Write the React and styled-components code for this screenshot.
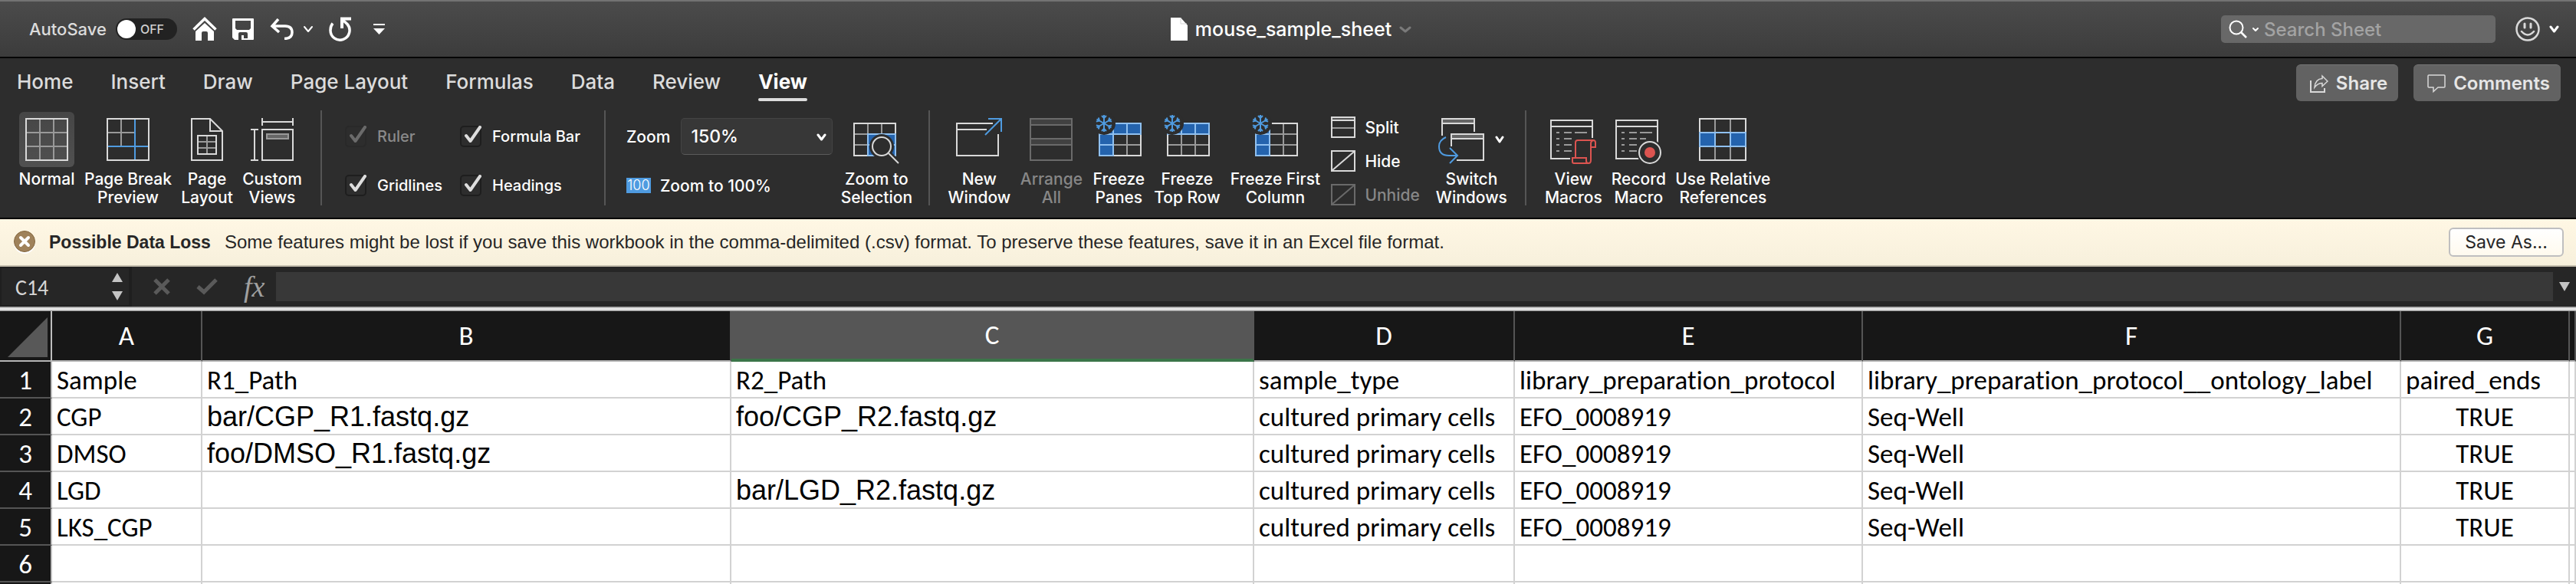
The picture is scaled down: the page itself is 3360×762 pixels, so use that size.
import React from "react";
import styled, { createGlobalStyle, css } from "styled-components";

const ui = `Inter, "Liberation Sans", sans-serif`;
const sheetFont = `Carlito, Calibri, "Open Sans", sans-serif`;
const arial = `"Liberation Sans", Arial, sans-serif`;

const LINE = "#d9d9d9";
const GREY = "#999999";
const DIM = "#6a6a6a";
const BLUE = "#4f9be0";
const FILL = "#2463ad";
const PALE = "#8fc0f0";
const BG = "#2d2d2d";
const RED = "#dc5450";

const Global = createGlobalStyle`
  *, *::before, *::after { box-sizing: border-box; }
  body { margin: 0; background: #fff; font-family: ${ui}; }
  button, input, select { font: inherit; color: inherit; margin: 0; }
  svg { display: block; flex: none; }
`;

const Window = styled.div`
  display: flex;
  flex-direction: column;
  height: 100vh;
  min-width: 2400px;
  overflow: hidden;
`;

/* ---------- title bar ---------- */

const TitleBar = styled.header`
  display: grid;
  grid-template-columns: 1fr auto 1fr;
  align-items: center;
  height: 76px;
  flex: none;
  padding: 0 20px 0 28px;
  border-top: 2px solid #737373;
  border-bottom: 2px solid #060606;
  background: linear-gradient(#4b4b4b, #3c3c3c);
  color: #fff;
`;

const QuickAccess = styled.div`
  display: flex;
  align-items: center;
  gap: 20px;
  padding-left: 10px;
`;

const AutoSave = styled.label`
  display: flex;
  align-items: center;
  gap: 12px;
  font-size: 22px;
  font-weight: 500;
  color: #dcdcdc;
`;

const SwitchTrack = styled.span`
  position: relative;
  display: block;
  width: 80px;
  height: 28px;
`;

const SwitchInput = styled.input`
  appearance: none;
  display: block;
  width: 80px;
  height: 28px;
  border-radius: 14px;
  background: #222;
  &::before {
    content: "";
    display: block;
    width: 24px;
    height: 24px;
    margin: 2px;
    border-radius: 50%;
    background: #fff;
  }
`;

const SwitchState = styled.span`
  position: absolute;
  left: 32px;
  top: 0;
  line-height: 28px;
  font-size: 16px;
  color: #cfcfcf;
`;

const IconButton = styled.button`
  display: flex;
  align-items: center;
  padding: 0;
  border: 0;
  background: none;
`;

const MenuButton = styled(IconButton)`
  padding-left: 8px;
`;

const UndoPair = styled.div`
  display: flex;
  align-items: center;
  gap: 12px;
`;

const DocTitle = styled.div`
  display: flex;
  align-items: center;
  gap: 10px;
  font-size: 25px;
  font-weight: 500;
`;

const TitleRight = styled.div`
  display: flex;
  align-items: center;
  justify-content: flex-end;
  gap: 26px;
`;

const SearchBox = styled.label`
  display: flex;
  align-items: center;
  gap: 6px;
  width: 358px;
  height: 36px;
  padding: 0 10px;
  border-radius: 5px;
  background: #686868;
`;

const SearchInput = styled.input`
  flex: 1;
  min-width: 0;
  padding: 0;
  border: 0;
  background: none;
  outline: none;
  font-size: 24px;
  font-weight: 500;
  &::placeholder {
    color: #a3a3a3;
    opacity: 1;
  }
`;

const SmileyButton = styled(IconButton)`
  gap: 12px;
  padding-right: 2px;
`;

/* ---------- tabs ---------- */

const TabBar = styled.div`
  display: flex;
  justify-content: space-between;
  flex: none;
  padding: 8px 20px 4px 22px;
  background: ${BG};
`;

const Tabs = styled.nav`
  display: flex;
  gap: 49px;
`;

const Tab = styled.a`
  height: 48px;
  line-height: 46px;
  font-size: 26px;
  font-weight: ${(p) => (p.$active ? 700 : 500)};
  color: ${(p) => (p.$active ? "#fff" : "#dcdcdc")};
  text-decoration: none;
  position: relative;
  ${(p) =>
    p.$active &&
    css`
      &::after {
        content: "";
        position: absolute;
        left: 0;
        right: 0;
        bottom: 0;
        height: 4px;
        border-radius: 2px;
        background: #dcdcdc;
      }
    `}
`;

const TabActions = styled.div`
  display: flex;
  gap: 20px;
`;

const ActionButton = styled.button`
  display: flex;
  align-items: center;
  gap: 10px;
  height: 48px;
  padding: 0 14px 0 18px;
  border: 0;
  border-top: 1px solid #757575;
  border-radius: 6px;
  background: #626262;
  color: #e6e6e6;
  font-size: 24px;
  font-weight: 600;
`;

/* ---------- ribbon ---------- */

const Ribbon = styled.div`
  display: flex;
  align-items: flex-start;
  flex: none;
  height: 150px;
  padding: 8px 0 0;
  border-bottom: 2px solid #000;
  background: ${BG};
  color: #fff;
`;

const Group = styled.div`
  display: flex;
  align-items: flex-start;
  gap: 14px;
  padding: 0 25px;
`;

const Divider = styled.div`
  width: 2px;
  height: 124px;
  background: #555;
`;

const ToolButton = styled.button`
  display: flex;
  flex-direction: column;
  align-items: center;
  gap: 4px;
  width: ${(p) => p.$width}px;
  padding: 2px 0 0;
  border: 0;
  background: none;
  font-size: 21px;
  font-weight: 500;
  line-height: 24px;
  white-space: nowrap;
  text-align: center;
  color: ${(p) => (p.disabled ? "#878787" : "#fff")};
`;

const ToolIcon = styled.span`
  display: flex;
  align-items: center;
  justify-content: center;
  gap: 14px;
  min-width: 72px;
  height: 72px;
  border-radius: 6px;
  background: ${(p) => (p.$pressed ? "linear-gradient(#464646, #505050)" : "none")};
`;

const CheckGrid = styled.div`
  display: grid;
  grid-template-columns: 150px auto;
  row-gap: 36px;
  padding: 20px 6px 0 5px;
`;

const CheckLabel = styled.label`
  position: relative;
  display: flex;
  align-items: center;
  gap: 14px;
  height: 28px;
  font-size: 20px;
  font-weight: 500;
  white-space: nowrap;
  color: ${(p) => (p.$disabled ? "#8a8a8a" : "#fff")};
  svg {
    position: absolute;
    left: 0;
    top: 0;
    pointer-events: none;
    opacity: ${(p) => (p.$disabled ? 0.35 : 1)};
  }
`;

const CheckInput = styled.input`
  appearance: none;
  width: 28px;
  height: 28px;
  border: 2px solid ${(p) => (p.disabled ? "#292929" : "#1e1e1e")};
  border-radius: 5px;
`;

const ZoomStack = styled.div`
  display: flex;
  flex-direction: column;
  gap: 26px;
  padding: 10px 0 0 2px;
`;

const ZoomRow = styled.div`
  display: flex;
  align-items: center;
  gap: 14px;
  font-size: 21px;
  font-weight: 500;
`;

const SelectWrap = styled.div`
  position: relative;
  svg {
    position: absolute;
    right: 8px;
    top: 20px;
    pointer-events: none;
  }
`;

const ZoomSelect = styled.select`
  appearance: none;
  display: block;
  width: 198px;
  height: 48px;
  padding: 0 12px;
  border: 1px solid #444;
  border-bottom: 1px solid #5c5c5c;
  border-radius: 5px;
  background: #373737;
  font-size: 23px;
`;

const InlineTool = styled.button`
  display: flex;
  align-items: center;
  gap: 12px;
  height: 28px;
  padding: 0;
  border: 0;
  background: none;
  font-size: 21px;
  font-weight: 500;
  white-space: nowrap;
  color: ${(p) => (p.disabled ? "#878787" : "#fff")};
`;

const HundredBadge = styled.span`
  width: 32px;
  background: ${BLUE};
  font-size: 18px;
  font-weight: 300;
  line-height: 20px;
  text-align: center;
`;

const InlineList = styled.div`
  display: flex;
  flex-direction: column;
  gap: 16px;
  width: 124px;
  padding-top: 8px;
`;

/* ---------- message bar ---------- */

const Banner = styled.div`
  display: flex;
  align-items: center;
  flex: none;
  height: 62px;
  padding: 0 16px 0 18px;
  border-bottom: 2px solid #c5bfae;
  background: linear-gradient(#fff7e4, #f7f0dc);
  color: #262626;
  font-family: ${arial};
  font-size: 24px;
`;

const BannerTitle = styled.strong`
  margin: 0 18px;
  font-size: 23px;
`;

const BannerText = styled.span`
  flex: 1;
`;

const SaveAs = styled.button`
  width: 150px;
  height: 38px;
  padding: 0;
  border: 2px solid #bfbfc0;
  border-radius: 6px;
  background: linear-gradient(#fff, #fffaee);
  font-family: ${ui};
  font-size: 23px;
`;

/* ---------- formula bar ---------- */

const FormulaBar = styled.div`
  display: flex;
  align-items: center;
  flex: none;
  height: 52px;
  padding-right: 8px;
  background: #262626;
`;

const NameBox = styled.div`
  display: flex;
  align-items: center;
  justify-content: space-between;
  width: 172px;
  height: 52px;
  padding: 0 8px 0 18px;
  border: 2px solid #1f1f1f;
  border-right-width: 4px;
`;

const NameInput = styled.input`
  width: 100px;
  padding: 2px 0 0;
  border: 0;
  background: none;
  font-family: ${sheetFont};
  font-size: 28px;
  color: #d6d6d6;
`;

const Stepper = styled.div`
  display: flex;
  flex-direction: column;
  gap: 12px;
`;

const FormulaTools = styled.div`
  display: flex;
  align-items: center;
  width: 188px;
  padding-left: 28px;
  gap: 34px;
`;

const Fx = styled.button`
  padding: 0;
  border: 0;
  background: none;
  font-family: "Liberation Serif", serif;
  font-style: italic;
  font-size: 38px;
  line-height: 40px;
  color: #a0a0a0;
`;

const FormulaInput = styled.input`
  flex: 1;
  height: 38px;
  margin-right: 8px;
  border: 0;
  background: #383838;
  color: #fff;
`;

/* ---------- grid ---------- */

const SheetArea = styled.main`
  flex: 1;
  min-height: 0;
  overflow: hidden;
  background: #fff;
  &::before {
    content: "";
    display: block;
    height: 6px;
    background: linear-gradient(#7d7d7d, #b5b5b5 20%, #fafafa 50%, #c6c6c6 80%, #8a8a8a);
  }
`;

const Sheet = styled.table`
  table-layout: fixed;
  width: 100%;
  border-spacing: 0;
  font-family: ${sheetFont};
  font-size: 35px;
  line-height: 44px;
  font-variant-ligatures: none;
  color: #000;
`;

const Col = styled.col`
  width: ${(p) => (p.$width ? p.$width + "px" : "auto")};
`;

const Corner = styled.td`
  height: 66px;
  padding: 0 4px 4px 10px;
  border-right: 2px solid #bdbdbd;
  border-bottom: 2px solid #b5b5b5;
  background: #171717;
  vertical-align: bottom;
`;

const ColHead = styled.th`
  height: 66px;
  padding: 0;
  border-right: 2px solid ${(p) => (p.$selected ? "#565656" : "#555")};
  border-bottom: ${(p) => (p.$selected ? "4px solid #3b7549" : "2px solid #b5b5b5")};
  background: ${(p) => (p.$selected ? "#565656" : "#171717")};
  color: #fff;
  font-weight: 400;
`;

const RowHead = styled.th`
  height: 48px;
  padding: 0;
  border-right: 2px solid #bdbdbd;
  border-bottom: 2px solid #555;
  background: #171717;
  color: #fff;
  font-weight: 400;
  vertical-align: bottom;
`;

const Cell = styled.td`
  height: 48px;
  padding: ${(p) => (p.$center ? "0" : "0 0 0 6px")};
  border-right: 2px solid #d2d2d2;
  border-bottom: 2px solid #d2d2d2;
  text-align: ${(p) => (p.$center ? "center" : "left")};
  vertical-align: bottom;
  white-space: nowrap;
  overflow: hidden;
  ${(p) =>
    p.$arial &&
    css`
      font-family: ${arial};
      font-size: 36px;
    `}
`;

/* ---------- icons ---------- */

const Svg = ({ w, h = 72, children }) => (
  <svg width={w} height={h} viewBox={`0 0 ${w} ${h}`} fill="none" stroke={LINE} strokeWidth="2" aria-hidden="true">
    {children}
  </svg>
);

const Chevron = ({ w = 12, h = 10, color = "#fff", sw = 3 }) => (
  <svg width={w} height={h} viewBox={`0 0 ${w} ${h}`} fill="none" stroke={color} strokeWidth={sw} strokeLinecap="round" strokeLinejoin="round" aria-hidden="true">
    <path d={`M2 2L${w / 2} ${h - 2}L${w - 2} 2`} />
  </svg>
);

const HomeIcon = () => (
  <Svg w={32} h={32}>
    <path d="M1.5 16.5L16 2.5L30.5 16.5" stroke="#fff" strokeWidth="3.5" />
    <path d="M4 19L16 8L28 19V31H20V21Q20 19 18 19H14Q12 19 12 21V31H4Z" fill="#fff" stroke="none" />
  </Svg>
);

const SaveIcon = () => (
  <Svg w={28} h={28}>
    <path fillRule="evenodd" stroke="none" fill="#fff" d="M1 0H27Q28 0 28 1V27Q28 28 27 28H3L0 25V1Q0 0 1 0ZM4 3V13L6 15H22L24 13V3ZM8 28V20Q8 18 10 18H18Q20 18 20 20V26H15V22H12V28Z" />
  </Svg>
);

const UndoIcon = () => (
  <Svg w={32} h={28}>
    <path d="M12 1L4 10L13 18M4 10H21Q30 10 30 18.5Q30 26 20 26.5" stroke="#fff" strokeWidth="3.5" />
  </Svg>
);

const RedoIcon = () => (
  <Svg w={30} h={32}>
    <path d="M5 8.5Q2 12 2 17.5A12.500 12.500 0 1 0 24 9.500L18 4" stroke="#fff" strokeWidth="3.5" />
    <path d="M29 2.500H17V15" stroke="#fff" strokeWidth="4" />
  </Svg>
);

const MenuIcon = () => (
  <Svg w={15} h={16}>
    <path d="M0 2H15" stroke="#fff" />
    <path d="M0 7H15L7.500 15Z" fill="#fff" stroke="none" />
  </Svg>
);

const FileIcon = () => (
  <Svg w={22} h={30}>
    <path d="M0 0H13L22 10V30H0Z" fill="#fff" stroke="none" />
    <path d="M13 0V8H21" stroke="#d5d5d5" strokeWidth="1" />
  </Svg>
);

const SearchIcon = () => (
  <Svg w={24} h={24}>
    <circle cx="10" cy="10" r="8.5" stroke="#fff" />
    <path d="M16 16L23 23" stroke="#fff" strokeWidth="2.5" />
  </Svg>
);

const SmileyIcon = () => (
  <Svg w={32} h={32}>
    <circle cx="16" cy="16" r="14.5" strokeWidth="2.5" />
    <path d="M12 9V14M20 9V14" strokeWidth="3" strokeLinecap="round" />
    <path d="M8 19Q16 28 24 19" strokeWidth="2.5" strokeLinecap="round" />
  </Svg>
);

const ShareIcon = () => (
  <Svg w={24} h={24}>
    <path d="M1 8V23H19V18" />
    <path d="M6 17Q7 6 16 5.500V2L23 9L16 15.500V11.500Q10 11.500 6 17Z" strokeWidth="1.5" />
  </Svg>
);

const CommentIcon = () => (
  <Svg w={24} h={24}>
    <path d="M2 1H22Q23 1 23 2V16Q23 17 22 17H14L8 22.500V17H2Q1 17 1 16V2Q1 1 2 1Z" strokeWidth="1.5" />
  </Svg>
);

const NormalIcon = () => (
  <Svg w={56}>
    <path d="M19 9V63M37 9V63M1 27H55M1 45H55" stroke={GREY} />
    <rect x="1" y="9" width="54" height="54" />
  </Svg>
);

const PageBreakIcon = () => (
  <Svg w={56}>
    <path d="M19 9V45M1 27H37" stroke={GREY} />
    <rect x="1" y="9" width="54" height="54" />
    <path d="M37 10V62M2 45H54" stroke={BLUE} />
  </Svg>
);

const PageLayoutIcon = () => (
  <Svg w={42}>
    <path d="M1 9H25L41 25V63H1ZM25 9V25H41" />
    <path d="M21 31V55M9 39H33M9 47H33" stroke={GREY} />
    <rect x="9" y="31" width="24" height="24" />
  </Svg>
);

const CustomViewsIcon = () => (
  <Svg w={56}>
    <path d="M15 8V18M55 8V18M15 13H55M0 23H10M0 63H10M5 23V63" />
    <rect x="15" y="23" width="40" height="40" />
    <rect x="21" y="29" width="28" height="6" fill="#666" stroke={GREY} />
  </Svg>
);

const ZoomSelectionIcon = () => (
  <Svg w={60}>
    <path d="M19 15V57M37 15V30M1 29H20M1 43H20" stroke={GREY} />
    <rect x="1" y="15" width="54" height="42" />
    <rect x="19" y="29" width="36" height="28" fill={FILL} stroke={PALE} />
    <path d="M37 29V57M19 43H55" stroke={PALE} />
    <circle cx="37" cy="45" r="16" fill={BG} stroke="none" />
    <path d="M44 52L60 68" stroke={BG} strokeWidth="7" />
    <circle cx="37" cy="45" r="12" />
    <path d="M46 54L59 67" />
  </Svg>
);

const NewWindowIcon = () => (
  <Svg w={60}>
    <path d="M48 15H1V57H55V29M1 23H40" />
    <path d="M42 9H59V26M59 9L38 30" stroke={BLUE} />
  </Svg>
);

const ArrangeIcon = () => (
  <Svg w={56}>
    <g stroke={DIM}>
      <rect x="1" y="9" width="54" height="54" />
      <rect x="1" y="9" width="54" height="8" fill="#414141" />
      <rect x="1" y="35" width="54" height="8" fill="#414141" />
    </g>
  </Svg>
);

const Snowflake = () => (
  <g>
    <circle cx="11" cy="15" r="15" fill={BG} stroke="none" />
    {[0, 60, 120, 180, 240, 300].map((a) => (
      <path key={a} transform={`rotate(${a} 11 15)`} d="M11 15V4M8 5L11 8L14 5" stroke={BLUE} />
    ))}
  </g>
);

const FreezeIcon = ({ row, column }) => (
  <Svg w={60}>
    <path d="M23 15V57M41 15V57M5 29H59M5 43H59" stroke={GREY} />
    <rect x="5" y="15" width="54" height="42" />
    {row && (
      <g stroke={PALE} fill={FILL}>
        <rect x="5" y="15" width="54" height="14" />
        <path d="M23 15V29M41 15V29" />
      </g>
    )}
    {column && (
      <g stroke={PALE} fill={FILL}>
        <rect x="5" y="15" width="18" height="42" />
        <path d="M5 29H23M5 43H23" />
      </g>
    )}
    <Snowflake />
  </Svg>
);

const SplitIcon = () => (
  <Svg w={32} h={28}>
    <path d="M1 15H31" stroke={GREY} />
    <rect x="1" y="1" width="30" height="26" />
    <path d="M2 3H30" stroke="#555" />
    <path d="M1 5H31" />
  </Svg>
);

const HideIcon = ({ color = LINE }) => (
  <Svg w={32} h={28}>
    <g stroke={color}>
      <rect x="1" y="1" width="30" height="26" />
      <path d="M2 26L30 2" />
    </g>
  </Svg>
);

const SwitchIcon = () => (
  <Svg w={60}>
    <rect x="5" y="9" width="42" height="6" fill="#666" stroke="none" />
    <path d="M5 31V9H47V26M5 15H47" />
    <rect x="17" y="29" width="42" height="6" fill="#666" stroke="none" />
    <path d="M17 45V29H59V63H24M17 35H59" />
    <path d="M10 33Q1 37 1 45Q1 57 14 57H25M15 47L25 57L15 67" stroke={BLUE} />
  </Svg>
);

const MacroWindow = () => (
  <g>
    <path d="M8 27H12M18 27H28M32 27H48M8 35H12M18 35H28M32 35H40M8 43H12M18 43H28M8 51H12M18 51H28" stroke={GREY} />
    <rect x="1" y="11" width="54" height="50" />
    <path d="M1 19H55" />
  </g>
);

const ViewMacrosIcon = () => (
  <Svg w={60}>
    <MacroWindow />
    <path d="M30 34H60V70H26V58H30Z" fill={BG} stroke="none" />
    <path d="M33 60V40Q33 37 36 37H56Q59 37 59 40V46H53M56 37Q53 38 53 41V63Q53 67 50 67H31Q29 67 29 65V60H47V64Q47 67 50 67" stroke={RED} />
  </Svg>
);

const RecordMacroIcon = () => (
  <Svg w={60}>
    <MacroWindow />
    <circle cx="45" cy="53" r="17" fill={BG} stroke="none" />
    <circle cx="45" cy="53" r="14" />
    <circle cx="45" cy="53" r="7" fill={RED} stroke="none" />
  </Svg>
);

const RelativeIcon = () => (
  <Svg w={62}>
    <path d="M21 9V63M41 9V63" stroke={GREY} />
    <rect x="1" y="9" width="60" height="54" />
    <g fill={FILL} stroke={PALE}>
      <rect x="1" y="27" width="20" height="18" />
      <rect x="41" y="27" width="20" height="18" />
      <path d="M21 27H41M21 45H41" />
    </g>
  </Svg>
);

const CheckMark = () => (
  <svg width="30" height="28" viewBox="0 0 30 28" fill="none" stroke="#dedede" strokeWidth="4" strokeLinecap="round" strokeLinejoin="round" aria-hidden="true">
    <path d="M8 13L13.5 20L26 2" />
  </svg>
);

const WarningIcon = () => (
  <svg width="28" height="30" viewBox="0 0 28 30" fill="none" aria-hidden="true">
    <circle cx="14" cy="16" r="14" fill="#fff" />
    <circle cx="14" cy="14" r="13.5" fill="#9f825b" stroke="#84673f" />
    <path d="M9 9L19 19M19 9L9 19" stroke="#fff" strokeWidth="4" strokeLinecap="round" />
  </svg>
);

const Triangle = ({ up }) => (
  <svg width="14" height="12" viewBox="0 0 14 12" fill="#c4c4c4" aria-hidden="true">
    <path d={up ? "M0 12H14L7 0Z" : "M0 0H14L7 12Z"} />
  </svg>
);

const CancelIcon = () => (
  <svg width="22" height="22" viewBox="0 0 22 22" stroke="#5a5a5a" strokeWidth="5" aria-hidden="true">
    <path d="M2 2L20 20M20 2L2 20" />
  </svg>
);

const EnterIcon = () => (
  <svg width="28" height="22" viewBox="0 0 28 22" fill="none" stroke="#5a5a5a" strokeWidth="5" aria-hidden="true">
    <path d="M2 11L10 18L26 2" />
  </svg>
);

const CornerTriangle = () => (
  <svg width="52" height="52" viewBox="0 0 52 52" fill="#585858" aria-hidden="true">
    <path d="M0 52L52 0V52Z" />
  </svg>
);

/* ---------- parts ---------- */

const Tool = ({ width, icon, lines, pressed, disabled, menu }) => (
  <ToolButton type="button" $width={width} disabled={disabled}>
    <ToolIcon $pressed={pressed}>
      {icon}
      {menu && <Chevron />}
    </ToolIcon>
    <span>
      {lines[0]}
      {lines[1] && (
        <>
          <br />
          {lines[1]}
        </>
      )}
    </span>
  </ToolButton>
);

const Check = ({ label, disabled }) => (
  <CheckLabel $disabled={disabled}>
    <CheckInput type="checkbox" defaultChecked disabled={disabled} />
    <CheckMark />
    {label}
  </CheckLabel>
);

const TABS = ["Home", "Insert", "Draw", "Page Layout", "Formulas", "Data", "Review", "View"];

const COLUMNS = [
  { id: "A", width: 196 },
  { id: "B", width: 690, arial: true },
  { id: "C", width: 682, arial: true, selected: true },
  { id: "D", width: 340 },
  { id: "E", width: 454 },
  { id: "F", width: 702 },
  { id: "G", width: 220, center: true },
  { id: "" },
];

const ROWS = [
  ["Sample", "R1_Path", "R2_Path", "sample_type", "library_preparation_protocol", "library_preparation_protocol__ontology_label", "paired_ends", "s"],
  ["CGP", "bar/CGP_R1.fastq.gz", "foo/CGP_R2.fastq.gz", "cultured primary cells", "EFO_0008919", "Seq-Well", "TRUE", ""],
  ["DMSO", "foo/DMSO_R1.fastq.gz", "", "cultured primary cells", "EFO_0008919", "Seq-Well", "TRUE", ""],
  ["LGD", "", "bar/LGD_R2.fastq.gz", "cultured primary cells", "EFO_0008919", "Seq-Well", "TRUE", ""],
  ["LKS_CGP", "", "", "cultured primary cells", "EFO_0008919", "Seq-Well", "TRUE", ""],
  ["", "", "", "", "", "", "", ""],
  ["", "", "", "", "", "", "", ""],
];

export default function App() {
  return (
    <Window>
      <Global />
      <TitleBar>
        <QuickAccess>
          <AutoSave>
            AutoSave
            <SwitchTrack>
              <SwitchInput type="checkbox" role="switch" />
              <SwitchState>OFF</SwitchState>
            </SwitchTrack>
          </AutoSave>
          <IconButton type="button" aria-label="Home"><HomeIcon /></IconButton>
          <IconButton type="button" aria-label="Save"><SaveIcon /></IconButton>
          <UndoPair>
            <IconButton type="button" aria-label="Undo"><UndoIcon /></IconButton>
            <IconButton type="button" aria-label="Undo history"><Chevron w={14} h={10} sw={2} /></IconButton>
          </UndoPair>
          <IconButton type="button" aria-label="Repeat"><RedoIcon /></IconButton>
          <MenuButton type="button" aria-label="Customize toolbar"><MenuIcon /></MenuButton>
        </QuickAccess>
        <DocTitle>
          <FileIcon />
          mouse_sample_sheet
          <Chevron w={16} h={9} color="#7a7a7a" />
        </DocTitle>
        <TitleRight>
          <SearchBox>
            <SearchIcon />
            <Chevron w={10} h={7} sw={2} />
            <SearchInput type="text" placeholder="Search Sheet" aria-label="Search Sheet" />
          </SearchBox>
          <SmileyButton type="button" aria-label="Feedback">
            <SmileyIcon />
            <Chevron w={13} />
          </SmileyButton>
        </TitleRight>
      </TitleBar>

      <TabBar>
        <Tabs>
          {TABS.map((t) => (
            <Tab key={t} href="#" $active={t === "View"}>{t}</Tab>
          ))}
        </Tabs>
        <TabActions>
          <ActionButton type="button"><ShareIcon />Share</ActionButton>
          <ActionButton type="button"><CommentIcon />Comments</ActionButton>
        </TabActions>
      </TabBar>

      <Ribbon>
        <Group>
          <Tool width={72} icon={<NormalIcon />} lines={["Normal"]} pressed />
          <Tool width={112} icon={<PageBreakIcon />} lines={["Page Break", "Preview"]} />
          <Tool width={66} icon={<PageLayoutIcon />} lines={["Page", "Layout"]} />
          <Tool width={76} icon={<CustomViewsIcon />} lines={["Custom", "Views"]} />
        </Group>
        <Divider />
        <Group>
          <CheckGrid>
            <Check label="Ruler" disabled />
            <Check label="Formula Bar" />
            <Check label="Gridlines" />
            <Check label="Headings" />
          </CheckGrid>
        </Group>
        <Divider />
        <Group>
          <ZoomStack>
            <ZoomRow>
              <label htmlFor="zoom">Zoom</label>
              <SelectWrap>
                <ZoomSelect id="zoom" defaultValue="150%">
                  <option>150%</option>
                </ZoomSelect>
                <Chevron w={13} />
              </SelectWrap>
            </ZoomRow>
            <InlineTool type="button">
              <HundredBadge>100</HundredBadge>
              Zoom to 100%
            </InlineTool>
          </ZoomStack>
          <Tool width={86} icon={<ZoomSelectionIcon />} lines={["Zoom to", "Selection"]} />
        </Group>
        <Divider />
        <Group>
          <Tool width={78} icon={<NewWindowIcon />} lines={["New", "Window"]} />
          <Tool width={82} icon={<ArrangeIcon />} lines={["Arrange", "All"]} disabled />
          <Tool width={66} icon={<FreezeIcon row column />} lines={["Freeze", "Panes"]} />
          <Tool width={84} icon={<FreezeIcon row />} lines={["Freeze", "Top Row"]} />
          <Tool width={118} icon={<FreezeIcon column />} lines={["Freeze First", "Column"]} />
          <InlineList>
            <InlineTool type="button"><SplitIcon />Split</InlineTool>
            <InlineTool type="button"><HideIcon />Hide</InlineTool>
            <InlineTool type="button" disabled><HideIcon color={DIM} />Unhide</InlineTool>
          </InlineList>
          <Tool width={90} icon={<SwitchIcon />} lines={["Switch", "Windows"]} menu />
        </Group>
        <Divider />
        <Group>
          <Tool width={72} icon={<ViewMacrosIcon />} lines={["View", "Macros"]} />
          <Tool width={70} icon={<RecordMacroIcon />} lines={["Record", "Macro"]} />
          <Tool width={122} icon={<RelativeIcon />} lines={["Use Relative", "References"]} />
        </Group>
      </Ribbon>

      <Banner>
        <WarningIcon />
        <BannerTitle>Possible Data Loss</BannerTitle>
        <BannerText>
          Some features might be lost if you save this workbook in the comma-delimited (.csv) format. To preserve these features, save it in an Excel file format.
        </BannerText>
        <SaveAs type="button">Save As...</SaveAs>
      </Banner>

      <FormulaBar>
        <NameBox>
          <NameInput type="text" defaultValue="C14" aria-label="Name box" />
          <Stepper>
            <IconButton type="button" aria-label="Previous name"><Triangle up /></IconButton>
            <IconButton type="button" aria-label="Next name"><Triangle /></IconButton>
          </Stepper>
        </NameBox>
        <FormulaTools>
          <IconButton type="button" aria-label="Cancel"><CancelIcon /></IconButton>
          <IconButton type="button" aria-label="Enter"><EnterIcon /></IconButton>
          <Fx type="button" aria-label="Insert function">fx</Fx>
        </FormulaTools>
        <FormulaInput type="text" aria-label="Formula" />
        <IconButton type="button" aria-label="Expand formula bar"><Triangle /></IconButton>
      </FormulaBar>

      <SheetArea>
        <Sheet>
          <colgroup>
            <Col $width={68} />
            {COLUMNS.map((c) => <Col key={c.id} $width={c.width} />)}
          </colgroup>
          <thead>
            <tr>
              <Corner><CornerTriangle /></Corner>
              {COLUMNS.map((c) => (
                <ColHead key={c.id} scope="col" $selected={c.selected}>{c.id}</ColHead>
              ))}
            </tr>
          </thead>
          <tbody>
            {ROWS.map((row, r) => (
              <tr key={r}>
                <RowHead scope="row">{r < 6 ? r + 1 : ""}</RowHead>
                {row.map((value, c) => (
                  <Cell key={c} $arial={r > 0 && COLUMNS[c].arial} $center={r > 0 && COLUMNS[c].center}>{value}</Cell>
                ))}
              </tr>
            ))}
          </tbody>
        </Sheet>
      </SheetArea>
    </Window>
  );
}
